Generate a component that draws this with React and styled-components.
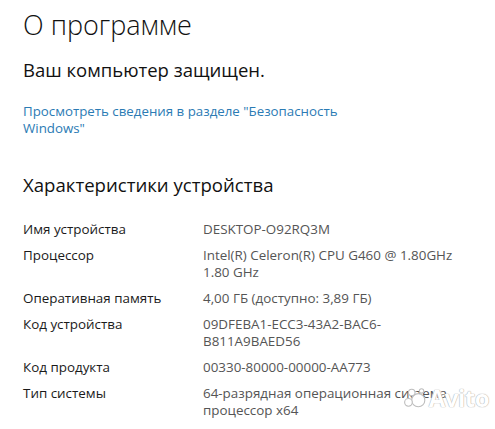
import React from "react";
import styled, { createGlobalStyle } from "styled-components";

const Global = createGlobalStyle`
  html, body {
    margin: 0;
    padding: 0;
    background: #ffffff;
  }
  body {
    font-family: "Open Sans", "Noto Sans", sans-serif;
    color: #111;
  }
`;

const Page = styled.div`
  position: relative;
  width: 495px;
  height: 429px;
  overflow: hidden;
  padding: 5px 23px 0 23px;
  box-sizing: border-box;
`;

const Title = styled.h1`
  margin: 0;
  font-size: 27px;
  font-weight: 300;
  line-height: 40px;
  color: #111;
`;

const Status = styled.div`
  margin-top: 13px;
  font-size: 18.5px;
  font-weight: 400;
  line-height: 24px;
  color: #111;
`;

const Link = styled.a`
  display: block;
  margin-top: 21px;
  width: 330px;
  font-size: 13.3px;
  line-height: 17px;
  color: #2b7bb4;
  text-decoration: none;
`;

const Section = styled.h2`
  margin: 35px 0 0 0;
  font-size: 18.6px;
  font-weight: 400;
  line-height: 26px;
  color: #111;
`;

const Specs = styled.div`
  margin-top: 23px;
  display: flex;
  flex-direction: column;
  gap: 9px;
`;

const Row = styled.div`
  display: grid;
  grid-template-columns: 180px 1fr;
  font-size: 13.4px;
  line-height: 17px;
`;

const Label = styled.div`
  color: #1a1a1a;
`;

const Value = styled.div`
  color: #555;
  width: 258px;
`;

const Watermark = styled.div`
  position: absolute;
  right: 6px;
  bottom: 15px;
  display: flex;
  align-items: center;
  gap: 2px;
  pointer-events: none;
`;

const WatermarkText = styled.span`
  font-family: "Open Sans", sans-serif;
  font-size: 24px;
  font-weight: 700;
  color: #fff;
  text-shadow: 0 0 1px #aaa, 0 0 1px #aaa;
  letter-spacing: -0.5px;
`;

const specs = [
  ["Имя устройства", "DESKTOP-O92RQ3M"],
  ["Процессор", "Intel(R) Celeron(R) CPU G460 @ 1.80GHz 1.80 GHz"],
  ["Оперативная память", "4,00 ГБ (доступно: 3,89 ГБ)"],
  ["Код устройства", "09DFEBA1-ECC3-43A2-BAC6-B811A9BAED56"],
  ["Код продукта", "00330-80000-00000-AA773"],
  ["Тип системы", "64-разрядная операционная система, процессор x64"],
];

export default function App() {
  return (
    <>
      <Global />
      <Page>
        <Title>О программе</Title>
        <Status>Ваш компьютер защищен.</Status>
        <Link href="#">
          Просмотреть сведения в разделе "Безопасность Windows"
        </Link>
        <Section>Характеристики устройства</Section>
        <Specs>
          {specs.map(([k, v]) => (
            <Row key={k}>
              <Label>{k}</Label>
              <Value>{v}</Value>
            </Row>
          ))}
        </Specs>
        <Watermark>
          <svg width="24" height="22" viewBox="0 0 22 20">
            <g fill="#fff" stroke="#bdbdbd" strokeWidth="1">
              <circle cx="14" cy="12" r="6" />
              <circle cx="5" cy="14" r="3.5" />
              <circle cx="8" cy="5" r="3" />
              <circle cx="17" cy="3.5" r="2" />
            </g>
          </svg>
          <WatermarkText>Avito</WatermarkText>
        </Watermark>
      </Page>
    </>
  );
}
